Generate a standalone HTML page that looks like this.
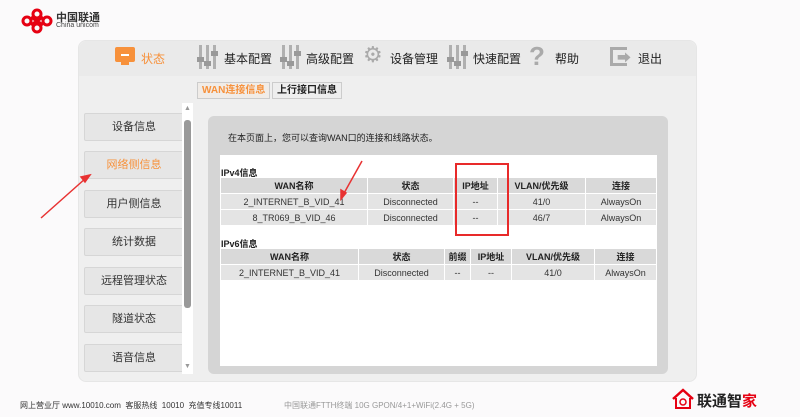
<!DOCTYPE html>
<html><head><meta charset="utf-8"><style>
*{margin:0;padding:0;box-sizing:border-box}
body{width:800px;height:417px;background:#fbfafb;font-family:"Liberation Sans","Noto Sans CJK SC",sans-serif;position:relative;overflow:hidden;color:#222}
.a{position:absolute}
.panel{left:78px;top:40px;width:619px;height:342px;background:#efefef;border-radius:8px;border:1px solid #e6e6e6}
.nav{font-size:12px;color:#222}
.btn{position:absolute;left:84px;width:100px;height:28px;background:#e6e6e6;border:1px solid #d6d6d6;border-radius:2px;font-size:11px;text-align:center;line-height:27px;color:#333}
.tab{position:absolute;top:82px;height:17px;font-size:10px;line-height:15px;padding:0 4px;border:1px solid #ccc;background:#eee;font-weight:bold}
table{border-collapse:separate;border-spacing:1px;font-size:9px;text-align:center;position:absolute;left:220px;background:#fff}
td,th{background:#e4e4e4;height:15px;padding:0;color:#333;font-weight:normal}
th{background:#d9d9d9;font-weight:bold;color:#222}
.lbl{font-size:9px;font-weight:bold;position:absolute;left:221px}
.sl{display:inline-block;width:20px;height:24px;vertical-align:middle;position:relative}
.sl i{position:absolute;top:0;width:3px;height:24px;background:#b0b0b0}
.sl b{position:absolute;width:7px;height:5px;background:#999}
</style></head><body>
<svg class="a" style="left:20px;top:8px" width="34" height="26" viewBox="0 0 34 26"><g fill="none" stroke="#e60012" stroke-width="3"><circle cx="17" cy="6" r="4"/><circle cx="17" cy="20" r="4"/><circle cx="7" cy="13" r="4"/><circle cx="27" cy="13" r="4"/><path d="M11 9l12 8M23 9l-12 8"/></g></svg>
<div class="a" style="left:56px;top:9px;font-size:11px;font-weight:bold;color:#333">中国联通</div>
<div class="a" style="left:56px;top:22px;font-size:7px;color:#444">China unicom</div>

<div class="a panel"></div>
<div class="a" style="left:79px;top:41px;width:617px;height:35px;background:#eaeaea;border-radius:8px 8px 0 0"></div>
<div class="a" style="left:115px;top:47px;width:20px;height:15px;background:#f7913b;border-radius:2px"></div>
<div class="a" style="left:121px;top:54px;width:8px;height:2px;background:#fff"></div>
<div class="a" style="left:121px;top:62px;width:8px;height:3px;background:#f7913b"></div>
<div class="a nav" style="left:141px;top:50px;color:#f7913b">状态</div>
<div class="a" style="left:197px;top:45px"><span class="sl"><i style="left:2px"></i><i style="left:9px"></i><i style="left:16px"></i><b style="left:0;top:12px"></b><b style="left:7px;top:16px"></b><b style="left:14px;top:6px"></b></span></div>
<div class="a nav" style="left:224px;top:50px">基本配置</div>
<div class="a" style="left:280px;top:45px"><span class="sl"><i style="left:2px"></i><i style="left:9px"></i><i style="left:16px"></i><b style="left:0;top:12px"></b><b style="left:7px;top:16px"></b><b style="left:14px;top:6px"></b></span></div>
<div class="a nav" style="left:306px;top:50px">高级配置</div>
<div class="a" style="left:363px;top:42px;font-size:22px;color:#aaa">⚙</div>
<div class="a nav" style="left:390px;top:50px">设备管理</div>
<div class="a" style="left:447px;top:45px"><span class="sl"><i style="left:2px"></i><i style="left:9px"></i><i style="left:16px"></i><b style="left:0;top:12px"></b><b style="left:7px;top:16px"></b><b style="left:14px;top:6px"></b></span></div>
<div class="a nav" style="left:473px;top:50px">快速配置</div>
<div class="a" style="left:529px;top:41px;font-size:26px;font-weight:bold;color:#aaa">?</div>
<div class="a nav" style="left:555px;top:50px">帮助</div>
<div class="a" style="left:610px;top:47px;width:17px;height:19px;border:3px solid #aaa;border-right:none"></div>
<div class="a" style="left:617px;top:48px;font-size:14px;color:#aaa;font-weight:bold">➡</div>
<div class="a nav" style="left:638px;top:50px">退出</div>
<div class="tab" style="left:197px;color:#f7913b;background:#f0ece8">WAN连接信息</div>
<div class="tab" style="left:272px;color:#222">上行接口信息</div>
<div class="btn" style="top:113px">设备信息</div>
<div class="btn" style="top:151px;color:#f7913b">网络侧信息</div>
<div class="btn" style="top:190px">用户侧信息</div>
<div class="btn" style="top:228px">统计数据</div>
<div class="btn" style="top:267px">远程管理状态</div>
<div class="btn" style="top:305px">隧道状态</div>
<div class="btn" style="top:344px">语音信息</div>
<div class="a" style="left:182px;top:103px;width:11px;height:271px;background:#fff"></div>
<div class="a" style="left:184px;top:120px;width:7px;height:188px;background:#999;border-radius:3px"></div>
<div class="a" style="left:184px;top:105px;font-size:7px;color:#999">▲</div>
<div class="a" style="left:184px;top:363px;font-size:7px;color:#999">▼</div>
<div class="a" style="left:208px;top:116px;width:460px;height:258px;background:#d5d5d5;border-radius:6px"></div>
<div class="a" style="left:228px;top:131px;font-size:9px;color:#222">在本页面上，您可以查询WAN口的连接和线路状态。</div>
<div class="a" style="left:220px;top:155px;width:437px;height:211px;background:#fff"></div>
<div class="lbl" style="top:166px">IPv4信息</div>
<table style="top:177px;width:437px">
<tr><th style="width:146px">WAN名称</th><th style="width:85px">状态</th><th style="width:43px">IP地址</th><th style="width:87px">VLAN/优先级</th><th>连接</th></tr>
<tr><td>2_INTERNET_B_VID_41</td><td>Disconnected</td><td>--</td><td>41/0</td><td>AlwaysOn</td></tr>
<tr><td>8_TR069_B_VID_46</td><td>Disconnected</td><td>--</td><td>46/7</td><td>AlwaysOn</td></tr>
</table>
<div class="lbl" style="top:237px">IPv6信息</div>
<table style="top:248px;width:437px">
<tr><th style="width:137px">WAN名称</th><th style="width:85px">状态</th><th style="width:25px">前缀</th><th style="width:40px">IP地址</th><th style="width:82px">VLAN/优先级</th><th>连接</th></tr>
<tr><td>2_INTERNET_B_VID_41</td><td>Disconnected</td><td>--</td><td>--</td><td>41/0</td><td>AlwaysOn</td></tr>
</table>
<div class="a" style="left:455px;top:163px;width:54px;height:73px;border:2px solid #e82a2a"></div>
<svg class="a" style="left:0;top:0" width="800" height="417"><g stroke="#e83232" stroke-width="1.5" fill="#e83232"><line x1="41" y1="218" x2="86" y2="178"/><path d="M90 175l-9 2 4 5z"/><line x1="362" y1="161" x2="343" y2="195"/><path d="M341 199l0-9 5 3z"/></g></svg>
<div class="a" style="left:20px;top:400px;font-size:8px;color:#333">网上营业厅 www.10010.com &nbsp;客服热线 &nbsp;10010 &nbsp;充值专线10011</div>
<div class="a" style="left:284px;top:400px;font-size:8px;color:#999">中国联通FTTH终端 10G GPON/4+1+WiFi(2.4G + 5G)</div>
<svg class="a" style="left:671px;top:388px" width="24" height="22" viewBox="0 0 24 22"><path d="M2 11L12 2l10 9" fill="none" stroke="#e60012" stroke-width="2.5"/><path d="M5 10v10h14V10" fill="none" stroke="#e60012" stroke-width="2"/><circle cx="12" cy="14" r="3" fill="none" stroke="#e60012" stroke-width="1.5"/></svg>
<div class="a" style="left:697px;top:390px;font-size:15px;font-weight:bold;color:#222">联通智<span style="color:#e60012">家</span></div>
</body></html>
